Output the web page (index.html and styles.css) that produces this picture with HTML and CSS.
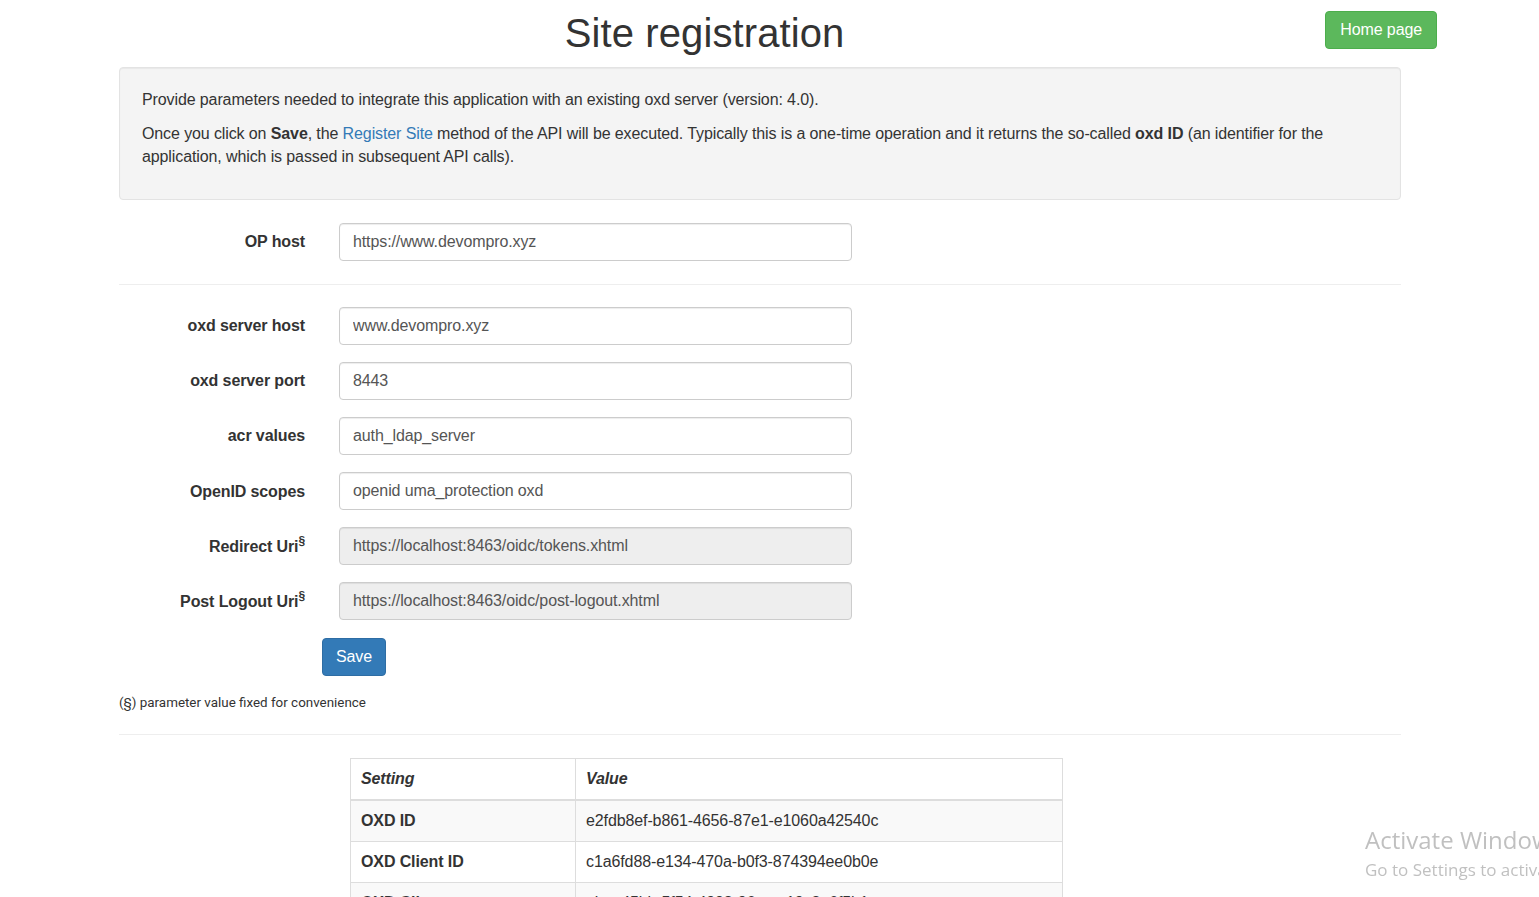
FILE: index.html
```html
<!DOCTYPE html>
<html lang="en">
<head>
<meta charset="utf-8">
<title>Site registration</title>
<link rel="stylesheet" href="styles.css">
</head>
<body>
<header class="page-header">
  <h1 class="title">Site registration</h1>
  <a class="btn btn-success" href="#">Home page</a>
</header>

<main class="container">
  <section class="well">
    <p>Provide parameters needed to integrate this application with an existing oxd server (version: 4.0).</p>
    <p>Once you click on <b>Save</b>, the <a class="link" href="#">Register Site</a> method of the API will be executed. Typically this is a one-time operation and it returns the so-called <b>oxd ID</b> (an identifier for the application, which is passed in subsequent API calls).</p>
  </section>

  <form class="form">
    <div class="form-group">
      <label class="control-label">OP host</label>
      <input class="form-control" type="text" value="https://www.devompro.xyz">
    </div>
    <hr class="divider first">
    <div class="form-group">
      <label class="control-label">oxd server host</label>
      <input class="form-control" type="text" value="www.devompro.xyz">
    </div>
    <div class="form-group">
      <label class="control-label">oxd server port</label>
      <input class="form-control" type="text" value="8443">
    </div>
    <div class="form-group">
      <label class="control-label">acr values</label>
      <input class="form-control" type="text" value="auth_ldap_server">
    </div>
    <div class="form-group">
      <label class="control-label">OpenID scopes</label>
      <input class="form-control" type="text" value="openid uma_protection oxd">
    </div>
    <div class="form-group">
      <label class="control-label">Redirect Uri<sup class="sect">§</sup></label>
      <input class="form-control" type="text" value="https://localhost:8463/oidc/tokens.xhtml" disabled>
    </div>
    <div class="form-group">
      <label class="control-label">Post Logout Uri<sup class="sect">§</sup></label>
      <input class="form-control" type="text" value="https://localhost:8463/oidc/post-logout.xhtml" disabled>
    </div>
    <div class="actions">
      <button class="btn btn-primary" type="button">Save</button>
    </div>
  </form>

  <p class="footnote">(§) parameter value fixed for convenience</p>
  <hr class="divider second">

  <table class="table">
    <thead>
      <tr><th class="col-setting">Setting</th><th>Value</th></tr>
    </thead>
    <tbody>
      <tr><td class="key">OXD ID</td><td>e2fdb8ef-b861-4656-87e1-e1060a42540c</td></tr>
      <tr><td class="key">OXD Client ID</td><td>c1a6fd88-e134-470a-b0f3-874394ee0b0e</td></tr>
      <tr><td class="key">OXD Client secret</td><td>ebee45bb-5f54-4998-96ce-a19c3e6f5b1e</td></tr>
    </tbody>
  </table>
</main>

<div class="activate">
  <div class="activate-title">Activate Windows</div>
  <div class="activate-sub">Go to Settings to activate Windows.</div>
</div>
</body>
</html>
```

FILE: styles.css
```css
html {
  scrollbar-width: none;
}
html::-webkit-scrollbar {
  width: 0;
  height: 0;
}
body {
  margin: 0;
  font-family: "Liberation Sans", Arial, Helvetica, sans-serif;
  font-size: 16px;
  line-height: 1.42857;
  letter-spacing: -0.11px;
  color: #333;
  background: #fff;
  overflow-x: hidden;
}

.page-header {
  display: flex;
  align-items: flex-start;
  padding: 0 102px 0 119px;
}
.title {
  flex: 1;
  margin: 11px 35px 12px 0;
  font-size: 40px;
  font-weight: 400;
  line-height: 44px;
  letter-spacing: 0.1px;
  text-align: center;
  color: #333;
}

.btn {
  display: inline-block;
  border: 1px solid transparent;
  border-radius: 4px;
  font-family: "Liberation Sans", Arial, sans-serif;
  font-size: 16px;
  line-height: 22px;
  letter-spacing: -0.11px;
  color: #fff;
  text-decoration: none;
  cursor: pointer;
}
.btn-success {
  margin-top: 11px;
  padding: 7px 14px;
  background: #5cb85c;
  border-color: #4cae4c;
}
.btn-primary {
  padding: 7px 13px;
  background: #337ab7;
  border-color: #2e6da4;
}

.container {
  margin-left: 119px;
  width: 1282px;
}

.well {
  background: #f4f4f4;
  border: 1px solid #e3e3e3;
  border-radius: 4px;
  box-shadow: inset 0 1px 1px rgba(0, 0, 0, 0.05);
  padding: 21px 22px 19px;
}
.well p {
  margin: 0 0 11px;
}
.link {
  color: #337ab7;
  text-decoration: none;
}

.form {
  margin-top: 23px;
}
.form-group {
  display: grid;
  grid-template-columns: 186px 513px;
  column-gap: 34px;
  align-items: center;
  margin-bottom: 17.2px;
}
.form-group:first-child {
  margin-bottom: 0;
}
.control-label {
  padding-top: 2px;
  font-weight: 700;
  text-align: right;
}
.sect {
  font-size: 12px;
  line-height: 0;
  vertical-align: 7px;
}
.form-control {
  box-sizing: border-box;
  width: 100%;
  height: 38px;
  padding: 6px 13px;
  font-family: "Liberation Sans", Arial, sans-serif;
  font-size: 16px;
  letter-spacing: -0.11px;
  color: #555;
  background: #fff;
  border: 1px solid #ccc;
  border-radius: 4px;
  box-shadow: inset 0 1px 1px rgba(0, 0, 0, 0.075);
}
.form-control:disabled {
  background: #eee;
  color: #555;
}

.divider {
  border: 0;
  border-top: 1px solid #eee;
  margin: 0;
}
.divider.first {
  margin: 23px 0 22px;
}
.divider.second {
  margin: 0 0 23px;
}

.actions {
  margin-left: 203px;
}

.footnote {
  margin: 18px 0 22px;
  font-family: Roboto, "Liberation Sans", sans-serif;
  font-size: 13.4px;
  line-height: 18px;
  letter-spacing: 0;
  color: #333;
}

.table {
  margin-left: 231px;
  width: 713px;
  border-collapse: collapse;
  border: 1px solid #ddd;
}
.table th,
.table td {
  padding: 9px 10px;
  line-height: 22px;
  text-align: left;
  border: 1px solid #ddd;
}
.table th {
  font-style: italic;
  font-weight: 700;
  border-bottom: 2px solid #ddd;
}
.col-setting {
  width: 204px;
}
.table tbody tr:nth-child(odd) {
  background: #f9f9f9;
}
.table td.key {
  font-weight: 700;
}

.activate {
  position: fixed;
  left: 1365px;
  top: 823px;
  white-space: nowrap;
  letter-spacing: 0;
  font-family: "Open Sans", "Noto Sans", sans-serif;
  color: rgba(150, 150, 150, 0.6);
}
.activate-title {
  font-size: 24px;
  line-height: 34px;
}
.activate-sub {
  font-size: 17px;
  line-height: 26px;
}
```
